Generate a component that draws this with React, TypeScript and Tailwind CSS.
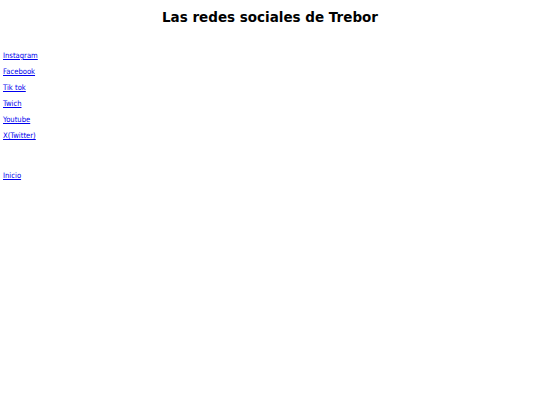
export default function App() {
  const links = ["Instagram", "Facebook", "Tik tok", "Twich", "Youtube", "X(Twitter)"];
  return (
    <div className="w-[540px] h-[405px] bg-white font-['DejaVu_Sans',sans-serif] text-black">
      <h1 className="pt-[9px] text-center text-[13.5px] font-bold leading-[17px]">Las redes sociales de Trebor</h1>
      <div className="pt-[22px] pl-[3px] flex flex-col font-['DejaVu_Sans_Condensed','DejaVu_Sans',sans-serif]">
        {links.map((l) => (
          <a key={l} href="#" className="text-[7.6px] leading-[16px] text-[#0000ee] underline w-fit">
            {l}
          </a>
        ))}
      </div>
      <div className="pt-[17px] pl-[3px] font-['DejaVu_Sans_Condensed','DejaVu_Sans',sans-serif]">
        <a href="#" className="text-[7.6px] leading-[16px] text-[#0000ee] underline">Inicio</a>
      </div>
    </div>
  );
}
